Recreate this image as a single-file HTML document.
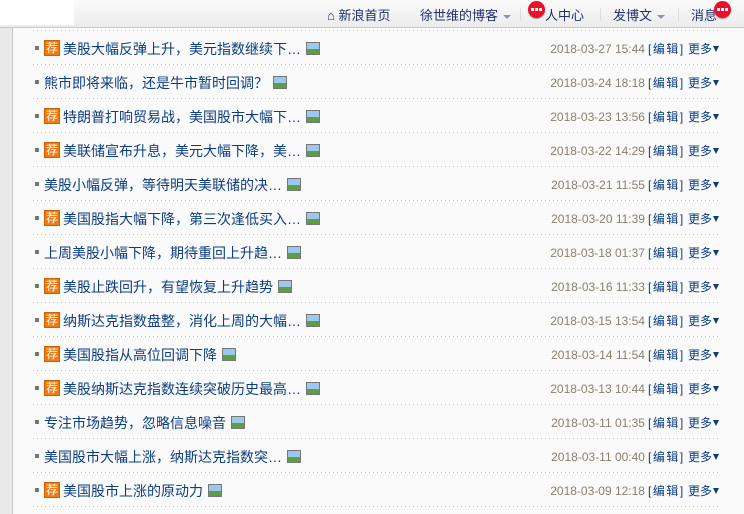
<html><head><style>
html,body{margin:0;width:744px;height:514px;overflow:hidden}
body{background:#fafafa;font-family:"Liberation Sans","Noto Sans CJK SC",sans-serif;position:relative}
#top{position:absolute;left:0;top:0;width:744px;height:27px;background:linear-gradient(#fbfbfb,#ececec);border-bottom:1px solid #c8c8c8}
#wb{position:absolute;left:0;top:0;width:74px;height:25px;background:#fff}
.nav{position:absolute;top:5px;font-size:13px;color:#1f2f6f;white-space:nowrap}
.arr{display:inline-block;border-left:4px solid transparent;border-right:4px solid transparent;border-top:4px solid #8a95b0;vertical-align:middle;margin-left:5px}
.sep{position:absolute;top:8px;width:1px;height:13px;background:#ddd}
.red{position:absolute;width:17px;height:17px;border-radius:50%;background:#e8102a;box-shadow:0 1px 1px #999}
.red:after{content:"";position:absolute;left:3px;top:7px;width:11px;height:3px;background:repeating-linear-gradient(90deg,#fff 0 3px,transparent 3px 4px)}
#left{position:absolute;left:0;top:28px;width:12px;height:486px;background:#e9e9e9;border-right:1px solid #c9c9c9}
.row{position:absolute;left:33px;width:686px;height:34px;background:linear-gradient(90deg,#b8c4c8 1px,transparent 1px) 0 0/4px 1px repeat-x}
.b{position:absolute;left:2px;top:16px;width:4px;height:4px;background:#6f7b70}
.t{position:absolute;top:9px;font-size:14px;color:#0c3d82;white-space:nowrap}
.tag{display:inline-block;width:16px;height:16px;background:#f07a10;border:1px solid #d06000;box-sizing:border-box;color:#fff;font-size:12px;line-height:14px;text-align:center;vertical-align:top;position:relative;top:1px;margin-right:3px}
.pic{display:inline-block;width:12px;height:11px;border:1px solid #777;background:linear-gradient(#9cc8f0 55%,#5aa040 55%);vertical-align:-1px;margin-left:5px}
.d{position:absolute;right:0;top:10px;font-size:12px;white-space:nowrap;color:#0c3d82}
.d s{text-decoration:none;color:#8a8070;margin-right:3px}
.d b{font-weight:normal;letter-spacing:1.5px}
.tri{display:inline-block;border-left:3.5px solid transparent;border-right:3.5px solid transparent;border-top:6px solid #0c3d82;margin-left:1px;vertical-align:1px}
</style></head><body>
<div id="top"><div id="wb"></div>
<div class="nav" style="left:327px">⌂ 新浪首页</div>
<div class="nav" style="left:420px">徐世维的博客<span class="arr"></span></div>
<div class="sep" style="left:520px"></div>
<div class="red" style="left:528px;top:1px"></div>
<div class="nav" style="left:545px">人中心</div>
<div class="sep" style="left:600px"></div>
<div class="nav" style="left:613px">发博文<span class="arr"></span></div>
<div class="sep" style="left:678px"></div>
<div class="nav" style="left:691px">消息</div>
<div class="red" style="left:714px;top:1px"></div>
</div>
<div id="left"></div>
<div class="row" style="top:30px"><i class="b"></i><div class="t" style="left:11px"><span class="tag">荐</span>美股大幅反弹上升，美元指数继续下…<span class="pic"></span></div><div class="d"><s>2018-03-27 15:44</s><b>[编辑]</b> 更多<span class="tri"></span></div></div>
<div class="row" style="top:64px"><i class="b"></i><div class="t" style="left:11px">熊市即将来临，还是牛市暂时回调？<span class="pic"></span></div><div class="d"><s>2018-03-24 18:18</s><b>[编辑]</b> 更多<span class="tri"></span></div></div>
<div class="row" style="top:98px"><i class="b"></i><div class="t" style="left:11px"><span class="tag">荐</span>特朗普打响贸易战，美国股市大幅下…<span class="pic"></span></div><div class="d"><s>2018-03-23 13:56</s><b>[编辑]</b> 更多<span class="tri"></span></div></div>
<div class="row" style="top:132px"><i class="b"></i><div class="t" style="left:11px"><span class="tag">荐</span>美联储宣布升息，美元大幅下降，美…<span class="pic"></span></div><div class="d"><s>2018-03-22 14:29</s><b>[编辑]</b> 更多<span class="tri"></span></div></div>
<div class="row" style="top:166px"><i class="b"></i><div class="t" style="left:11px">美股小幅反弹，等待明天美联储的决…<span class="pic"></span></div><div class="d"><s>2018-03-21 11:55</s><b>[编辑]</b> 更多<span class="tri"></span></div></div>
<div class="row" style="top:200px"><i class="b"></i><div class="t" style="left:11px"><span class="tag">荐</span>美国股指大幅下降，第三次逢低买入…<span class="pic"></span></div><div class="d"><s>2018-03-20 11:39</s><b>[编辑]</b> 更多<span class="tri"></span></div></div>
<div class="row" style="top:234px"><i class="b"></i><div class="t" style="left:11px">上周美股小幅下降，期待重回上升趋…<span class="pic"></span></div><div class="d"><s>2018-03-18 01:37</s><b>[编辑]</b> 更多<span class="tri"></span></div></div>
<div class="row" style="top:268px"><i class="b"></i><div class="t" style="left:11px"><span class="tag">荐</span>美股止跌回升，有望恢复上升趋势<span class="pic"></span></div><div class="d"><s>2018-03-16 11:33</s><b>[编辑]</b> 更多<span class="tri"></span></div></div>
<div class="row" style="top:302px"><i class="b"></i><div class="t" style="left:11px"><span class="tag">荐</span>纳斯达克指数盘整，消化上周的大幅…<span class="pic"></span></div><div class="d"><s>2018-03-15 13:54</s><b>[编辑]</b> 更多<span class="tri"></span></div></div>
<div class="row" style="top:336px"><i class="b"></i><div class="t" style="left:11px"><span class="tag">荐</span>美国股指从高位回调下降<span class="pic"></span></div><div class="d"><s>2018-03-14 11:54</s><b>[编辑]</b> 更多<span class="tri"></span></div></div>
<div class="row" style="top:370px"><i class="b"></i><div class="t" style="left:11px"><span class="tag">荐</span>美股纳斯达克指数连续突破历史最高…<span class="pic"></span></div><div class="d"><s>2018-03-13 10:44</s><b>[编辑]</b> 更多<span class="tri"></span></div></div>
<div class="row" style="top:404px"><i class="b"></i><div class="t" style="left:11px">专注市场趋势，忽略信息噪音<span class="pic"></span></div><div class="d"><s>2018-03-11 01:35</s><b>[编辑]</b> 更多<span class="tri"></span></div></div>
<div class="row" style="top:438px"><i class="b"></i><div class="t" style="left:11px">美国股市大幅上涨，纳斯达克指数突…<span class="pic"></span></div><div class="d"><s>2018-03-11 00:40</s><b>[编辑]</b> 更多<span class="tri"></span></div></div>
<div class="row" style="top:472px"><i class="b"></i><div class="t" style="left:11px"><span class="tag">荐</span>美国股市上涨的原动力<span class="pic"></span></div><div class="d"><s>2018-03-09 12:18</s><b>[编辑]</b> 更多<span class="tri"></span></div></div>
<div class="row" style="top:506px;height:8px"></div>
</body></html>
